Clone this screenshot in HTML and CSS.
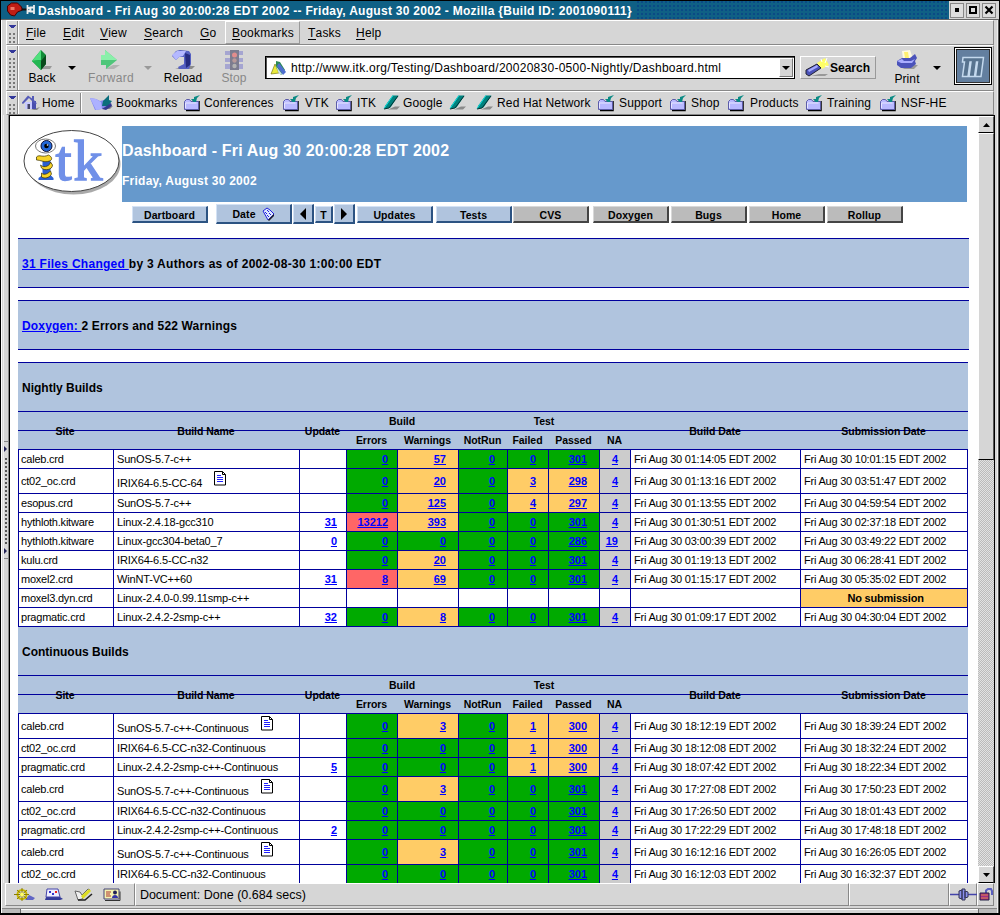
FILE: index.html
```html
<!DOCTYPE html>
<html lang="en">
<head>
<meta charset="utf-8">
<title>Dashboard - Fri Aug 30 20:00:28 EDT 2002</title>
<link rel="stylesheet" href="styles.css">
</head>
<body>
<svg class="defs" width="0" height="0">
  <symbol id="folder" viewBox="0 0 18 17">
    <path d="M2 15.500h13V6" fill="none" stroke="#000" stroke-width="1.500"/>
    <path d="M.5 6.500l2-2h3l1.500 2h7.500v8H.5z" fill="#b9b9ff" stroke="#5c5ca8"/>
    <path d="M1.500 13V8h11" fill="none" stroke="#e6e6ff"/>
    <path d="M7 4l3 0V2L16 0l-3 3-1 4H9.500z" fill="#0a8a84"/>
  </symbol>
  <symbol id="marker" viewBox="0 0 18 17">
    <path d="M5 14.500h9l3-3h-5z" fill="#8a8a8a"/>
    <path d="M9.500.5h6l-8 12-6 1.500.5-3z" fill="#00827e"/>
    <path d="M1 13.500L10 .5" stroke="#12e0e0" fill="none"/>
    <path d="M1 14l5-1 9-12" stroke="#033" fill="none"/>
  </symbol>
  <symbol id="note" viewBox="0 0 13 15">
    <path d="M.5.5h8l3 3v10.500H.5z" fill="#fff" stroke="#000"/>
    <path d="M8.500.5v3h3" fill="none" stroke="#000"/>
    <path d="M3 4.500h4M3 6.500h6M3 8.500h6M3 10.500h6" stroke="#22f"/>
  </symbol>
</svg>
<div class="window">
  <header class="titlebar">
    <svg class="pin" width="32" height="16" viewBox="0 0 32 16"><path d="M2 4l4-3 6 0 4 4 1 3-5 2-3 4-4-1-3-4z" fill="#c01d14" stroke="#400"/><path d="M5 5h4v3H5z" fill="#e76"/><path d="M16 7.500h6" stroke="#111" stroke-width="2"/><path d="M22 3v9M22 5l3 2v1l-3 2M28.500 3v9M24 5.500h5M24 9.500h5" stroke="#eee" stroke-width="1.800" fill="none"/></svg>
    <span class="title">Dashboard - Fri Aug 30 20:00:28 EDT 2002 -- Friday, August 30 2002 - Mozilla {Build ID: 2001090111}</span>
    <span class="texture"></span>
    <div class="winbtns">
      <b><svg width="12" height="12"><path d="M4 4h4v4H4z"/></svg></b><b><svg width="12" height="12"><path d="M3 3h6v6H3z" fill="none" stroke="#000" stroke-width="2"/></svg></b><b><svg width="12" height="12"><path d="M2.500 2.500l7 7M9.500 2.500l-7 7" stroke="#000" stroke-width="2.200"/></svg></b>
    </div>
  </header>

  <div class="bar menubar">
    <i class="grip"></i>
    <nav class="menu">
      <span class="m1"><u>F</u>ile</span><span class="m2"><u>E</u>dit</span><span class="m3"><u>V</u>iew</span><span class="m4"><u>S</u>earch</span><span class="m5"><u>G</u>o</span><span class="m6"><u>B</u>ookmarks</span><span class="m7"><u>T</u>asks</span><span class="m8"><u>H</u>elp</span>
    </nav>
  </div>

  <div class="bar navbar">
    <i class="grip"></i>
    <div class="tool back"><svg width="22" height="21"><path d="M8 19h11l2-3h-7z" fill="#999"/><path d="M10 0l5 5v9l-5 6-9-9z" fill="#128c38"/><path d="M10 0v10l-9 1z" fill="#4fe07c"/><path d="M10 10v10l-9-9z" fill="#22b652"/><path d="M10 11l5-6v9l-5 6z" fill="#0a4a1c"/></svg><span>Back</span></div>
    <i class="drop d1"></i>
    <div class="tool fwd"><svg width="22" height="21"><path d="M6 19h9l6-4h-7z" fill="#b3b3b3"/><path d="M6 0l12 10-11 9V15H2V5h4z" fill="#4fc67a"/><path d="M6 0l12 10H2V5h4z" fill="#8af0aa"/></svg><span>Forward</span></div>
    <i class="drop d2"></i>
    <div class="tool reload"><svg width="24" height="21"><path d="M4 19h17l3-3h-9z" fill="#8c8c8c"/><path d="M5 1l4-1 9 1 2 3v10l-2 5H8l-1-2 6-3V7H8L5 10 1 6z" fill="#5560c2"/><path d="M1 5l5-4 9 0-3 5-4 1-3 3z" fill="#b4b8ff"/><path d="M14 3l5 2v10l-4 3z" fill="#252b80"/></svg><span>Reload</span></div>
    <div class="tool stop"><svg width="20" height="21"><path d="M1 1h18v4H1zM1 8h18v4H1zM1 14h18v5H1z" fill="#9a9ad0"/><path d="M6 0h9v20H6z" fill="#66667e"/><circle cx="10.500" cy="5" r="2.500" fill="#e57b7b"/><circle cx="10.500" cy="10.500" r="2.200" fill="#b08a8a"/><circle cx="10.500" cy="16" r="2.200" fill="#aaa"/></svg><span>Stop</span></div>
    <div class="url"><svg width="18" height="18" viewBox="0 0 18 18"><path d="M1 15l4-10 4 9z" fill="#eaea3c" stroke="#660" stroke-width=".6"/><path d="M6 2l4 1 5 8-4 5-5-8z" fill="#2a8a56"/><path d="M9 4l7 9-3 3-6-9z" fill="#4f6fd0"/><path d="M6 7l6 8H9z" fill="#cde"/></svg><span>http://www.itk.org/Testing/Dashboard/20020830-0500-Nightly/Dashboard.html</span><b><i class="drop"></i></b></div>
    <div class="search"><svg width="25" height="19"><path d="M12 5l8-5 4 7-7 4z" fill="#ffff66"/><path d="M16 1l1 3M22 0l-2 5M24 9l-4-1" stroke="#fff"/><path d="M6 18h14l3-2h-9z" fill="#999"/><path d="M1 12l11-6 4 4-12 8-3-2z" fill="#4a52b8" stroke="#223"/><path d="M3 12l9-5 1 2-9 5z" fill="#a5a9ff"/></svg><span>Search</span></div>
    <div class="tool print"><svg width="26" height="21"><path d="M8 19h12l4-4h-5z" fill="#999"/><path d="M8 1l8-1 3 9H9z" fill="#fffbe0"/><path d="M10 2h4l1 6h-4z" fill="#fff070"/><path d="M3 11l5-3h8l5-4 2 4-2 3 1 3-5 4H7l-4-3z" fill="#4b53ba"/><path d="M3 11l5-2 2 2h7l4-2-3 4H7z" fill="#a9adff"/></svg><span>Print</span></div>
    <i class="drop d3"></i>
    <div class="throb"><svg width="32" height="32"><path d="M6 7.500h20.500L24 26.500h-5.500L20.500 12h-1L17.500 26.500h-5.500L14 12h-1L11 26.500H5.500L7.500 12H5.500z" fill="#57738f" stroke="#c4d9ee" stroke-width="1.500"/></svg></div>
  </div>

  <div class="bar links">
    <i class="grip"></i>
    <span class="l0"><svg width="20" height="17" viewBox="0 0 20 17"><path d="M12 14l6-2-3 3H9z" fill="#888"/><path d="M3 7h7v7H3z" fill="#c8caff"/><path d="M10 6h4v8h-4z" fill="#4a4fae"/><path d="M-.5 8L6 .5l4 3V1h2v4l3 3.500-2 .5-6-6-6 6z" fill="#555bb8"/><path d="M5.500 9h2.500v5H5.500z" fill="#446"/></svg>Home</span>
    <i class="vsep"></i>
    <span class="l1"><svg width="26" height="17" viewBox="0 0 26 17"><path d="M8 14h12l3-3z" fill="#888"/><path d="M0 3l6 1 4 2 8-2 3 5-9 5-7 1z" fill="#8287ec"/><path d="M0 3l6 1 5 3 1 7-6 1z" fill="#adb1ff"/><path d="M13 6l6-6v5l3 1-4 5h-6z" fill="#0b6e7c"/><path d="M12 14l9-6 1 3-6 4z" fill="#33388e"/></svg>Bookmarks</span>
    <span class="l2"><svg class="i20"><use href="#folder"/></svg>Conferences</span>
    <span class="l3"><svg class="i22"><use href="#folder"/></svg>VTK</span>
    <span class="l4"><svg class="i21"><use href="#folder"/></svg>ITK</span>
    <span class="l5"><svg class="i20"><use href="#marker"/></svg>Google</span>
    <span class="l6"><svg class="i20"><use href="#marker"/></svg></span>
    <span class="l7"><svg class="i21"><use href="#marker"/></svg>Red Hat Network</span>
    <span class="l8"><svg class="i21"><use href="#folder"/></svg>Support</span>
    <span class="l9"><svg class="i21"><use href="#folder"/></svg>Shop</span>
    <span class="l10"><svg class="i22"><use href="#folder"/></svg>Products</span>
    <span class="l11"><svg class="i21"><use href="#folder"/></svg>Training</span>
    <span class="l12"><svg class="i21"><use href="#folder"/></svg>NSF-HE</span>
  </div>

  <div class="main">
    <aside class="split"><i></i></aside>
    <section class="page">
      <div class="head">
        <svg class="logo" width="98" height="67" viewBox="0 0 98 67">
          <ellipse cx="50" cy="34" rx="47" ry="30.500" fill="#aaa"/>
          <ellipse cx="48" cy="31" rx="47.500" ry="30.500" fill="#fff" stroke="#444"/>
          <text x="32" y="50" class="tk">tk</text>
          <path d="M14 27h13v18l3 3v2H15v-2l4-3V31z" fill="#2b5fd0"/>
          <path d="M13 27c3-3 6 1 12-2 4 2 4 5 1 6-5 2-9-1-13-1zM17 35c4 4 10 0 10-3l2 3c0 5-8 6-11 3zM18 43c3 3 7 0 9-2l1 3c-2 4-7 5-10 3z" fill="#f6d327" stroke="#332b00" stroke-width=".7"/>
          <ellipse cx="22" cy="16" rx="10" ry="7" fill="#fff" stroke="#777"/>
          <circle cx="23" cy="16" r="5.500" fill="#2468d8" stroke="#113"/><circle cx="23" cy="16" r="2.300"/><circle cx="24" cy="15" r=".8" fill="#fff"/>
        </svg>
        <div class="banner"><h1>Dashboard - Fri Aug 30 20:00:28 EDT 2002</h1><h2>Friday, August 30 2002</h2></div>
      </div>
      <div class="btns">
        <b class="bl b1">Dartboard</b><b class="bl tall b2">Date <svg width="14" height="14"><path d="M2 4l4-3 3 2 4 4-6 6z" fill="#dde6ff" stroke="#22d"/><path d="M7 13l6-6v2l-5 5z" fill="#222"/><path d="M4 5l2 2M6 3l2 2M6 8l2 2M8 6l2 2" stroke="#22d"/></svg></b><b class="bl tall b3"><svg width="8" height="12"><path d="M7 0v12L1 6z"/></svg></b><b class="bl b4">T</b><b class="bl tall b5"><svg width="8" height="12"><path d="M1 0v12l6-6z"/></svg></b><b class="bl b6">Updates</b><b class="bl b7">Tests</b><b class="b8">CVS</b><b class="b9">Doxygen</b><b class="b10">Bugs</b><b class="b11">Home</b><b class="b12">Rollup</b>
      </div>
      <p class="panel"><a>31 Files Changed </a>by 3 Authors as of 2002-08-30 1:00:00 EDT</p>
      <p class="panel dox"><a>Doxygen: </a>2 Errors and 522 Warnings</p>
      <table>
        <colgroup><col class="c1"><col class="c2"><col class="c3"><col class="c4"><col class="c5"><col class="c6"><col class="c7"><col class="c8"><col class="c9"><col class="c10"><col class="c11"></colgroup>
        <tr class="cap"><th colspan="11">Nightly Builds</th></tr>
        <tr class="h"><th rowspan="2" class="x">Site</th><th rowspan="2" class="x">Build Name</th><th rowspan="2" class="x">Update</th><th colspan="2">Build</th><th colspan="4">Test</th><th rowspan="2" class="x">Build Date</th><th rowspan="2" class="x">Submission Date</th></tr>
        <tr class="h"><th>Errors</th><th>Warnings</th><th>NotRun</th><th>Failed</th><th>Passed</th><th>NA</th></tr>
        <tr><td>caleb.crd<td>SunOS-5.7-c++<td><td class="g"><a>0</a><td class="o"><a>57</a><td class="g"><a>0</a><td class="g"><a>0</a><td class="g"><a>301</a><td class="n"><a>4</a><td>Fri Aug 30 01:14:05 EDT 2002<td>Fri Aug 30 10:01:15 EDT 2002</tr>
        <tr class="t"><td>ct02_oc.crd<td>IRIX64-6.5-CC-64<svg class="note"><use href="#note"/></svg><td><td class="g"><a>0</a><td class="o"><a>20</a><td class="g"><a>0</a><td class="o"><a>3</a><td class="o"><a>298</a><td class="n"><a>4</a><td>Fri Aug 30 01:13:16 EDT 2002<td>Fri Aug 30 03:51:47 EDT 2002</tr>
        <tr><td>esopus.crd<td>SunOS-5.7-c++<td><td class="g"><a>0</a><td class="o"><a>125</a><td class="g"><a>0</a><td class="o"><a>4</a><td class="o"><a>297</a><td class="n"><a>4</a><td>Fri Aug 30 01:13:55 EDT 2002<td>Fri Aug 30 04:59:54 EDT 2002</tr>
        <tr><td>hythloth.kitware<td>Linux-2.4.18-gcc310<td><a>31</a><td class="r"><a>13212</a><td class="o"><a>393</a><td class="g"><a>0</a><td class="g"><a>0</a><td class="g"><a>301</a><td class="n"><a>4</a><td>Fri Aug 30 01:30:51 EDT 2002<td>Fri Aug 30 02:37:18 EDT 2002</tr>
        <tr><td>hythloth.kitware<td>Linux-gcc304-beta0_7<td><a>0</a><td class="g"><a>0</a><td class="g"><a>0</a><td class="g"><a>0</a><td class="g"><a>0</a><td class="g"><a>286</a><td class="n"><a>19</a><td>Fri Aug 30 03:00:39 EDT 2002<td>Fri Aug 30 03:49:22 EDT 2002</tr>
        <tr><td>kulu.crd<td>IRIX64-6.5-CC-n32<td><td class="g"><a>0</a><td class="o"><a>20</a><td class="g"><a>0</a><td class="g"><a>0</a><td class="g"><a>301</a><td class="n"><a>4</a><td>Fri Aug 30 01:19:13 EDT 2002<td>Fri Aug 30 06:28:41 EDT 2002</tr>
        <tr><td>moxel2.crd<td>WinNT-VC++60<td><a>31</a><td class="r"><a>8</a><td class="o"><a>69</a><td class="g"><a>0</a><td class="g"><a>0</a><td class="g"><a>301</a><td class="n"><a>4</a><td>Fri Aug 30 01:15:17 EDT 2002<td>Fri Aug 30 05:35:02 EDT 2002</tr>
        <tr><td>moxel3.dyn.crd<td>Linux-2.4.0-0.99.11smp-c++<td><td><td><td><td><td><td><td><td class="o none">No submission</tr>
        <tr><td>pragmatic.crd<td>Linux-2.4.2-2smp-c++<td><a>32</a><td class="g"><a>0</a><td class="o"><a>8</a><td class="g"><a>0</a><td class="g"><a>0</a><td class="g"><a>301</a><td class="n"><a>4</a><td>Fri Aug 30 01:09:17 EDT 2002<td>Fri Aug 30 04:30:04 EDT 2002</tr>
        <tr class="cap"><th colspan="11">Continuous Builds</th></tr>
        <tr class="h"><th rowspan="2" class="x">Site</th><th rowspan="2" class="x">Build Name</th><th rowspan="2" class="x">Update</th><th colspan="2">Build</th><th colspan="4">Test</th><th rowspan="2" class="x">Build Date</th><th rowspan="2" class="x">Submission Date</th></tr>
        <tr class="h"><th>Errors</th><th>Warnings</th><th>NotRun</th><th>Failed</th><th>Passed</th><th>NA</th></tr>
        <tr class="t"><td>caleb.crd<td>SunOS-5.7-c++-Continuous<svg class="note"><use href="#note"/></svg><td><td class="g"><a>0</a><td class="o"><a>3</a><td class="g"><a>0</a><td class="o"><a>1</a><td class="o"><a>300</a><td class="n"><a>4</a><td>Fri Aug 30 18:12:19 EDT 2002<td>Fri Aug 30 18:39:24 EDT 2002</tr>
        <tr><td>ct02_oc.crd<td>IRIX64-6.5-CC-n32-Continuous<td><td class="g"><a>0</a><td class="g"><a>0</a><td class="g"><a>0</a><td class="o"><a>1</a><td class="o"><a>300</a><td class="n"><a>4</a><td>Fri Aug 30 18:12:08 EDT 2002<td>Fri Aug 30 18:32:24 EDT 2002</tr>
        <tr><td>pragmatic.crd<td>Linux-2.4.2-2smp-c++-Continuous<td><a>5</a><td class="g"><a>0</a><td class="g"><a>0</a><td class="g"><a>0</a><td class="o"><a>1</a><td class="o"><a>300</a><td class="n"><a>4</a><td>Fri Aug 30 18:07:42 EDT 2002<td>Fri Aug 30 18:22:34 EDT 2002</tr>
        <tr class="t"><td>caleb.crd<td>SunOS-5.7-c++-Continuous<svg class="note"><use href="#note"/></svg><td><td class="g"><a>0</a><td class="o"><a>3</a><td class="g"><a>0</a><td class="g"><a>0</a><td class="g"><a>301</a><td class="n"><a>4</a><td>Fri Aug 30 17:27:08 EDT 2002<td>Fri Aug 30 17:50:23 EDT 2002</tr>
        <tr><td>ct02_oc.crd<td>IRIX64-6.5-CC-n32-Continuous<td><td class="g"><a>0</a><td class="g"><a>0</a><td class="g"><a>0</a><td class="g"><a>0</a><td class="g"><a>301</a><td class="n"><a>4</a><td>Fri Aug 30 17:26:50 EDT 2002<td>Fri Aug 30 18:01:43 EDT 2002</tr>
        <tr><td>pragmatic.crd<td>Linux-2.4.2-2smp-c++-Continuous<td><a>2</a><td class="g"><a>0</a><td class="g"><a>0</a><td class="g"><a>0</a><td class="g"><a>0</a><td class="g"><a>301</a><td class="n"><a>4</a><td>Fri Aug 30 17:22:29 EDT 2002<td>Fri Aug 30 17:48:18 EDT 2002</tr>
        <tr class="t"><td>caleb.crd<td>SunOS-5.7-c++-Continuous<svg class="note"><use href="#note"/></svg><td><td class="g"><a>0</a><td class="o"><a>3</a><td class="g"><a>0</a><td class="g"><a>0</a><td class="g"><a>301</a><td class="n"><a>4</a><td>Fri Aug 30 16:12:16 EDT 2002<td>Fri Aug 30 16:26:05 EDT 2002</tr>
        <tr><td>ct02_oc.crd<td>IRIX64-6.5-CC-n32-Continuous<td><td class="g"><a>0</a><td class="g"><a>0</a><td class="g"><a>0</a><td class="g"><a>0</a><td class="g"><a>301</a><td class="n"><a>4</a><td>Fri Aug 30 16:12:03 EDT 2002<td>Fri Aug 30 16:32:37 EDT 2002</tr>
      </table>
    </section>
    <div class="scroll"><b class="sb"><svg width="7" height="4"><path d="M0 4l3.500-4L7 4z"/></svg></b><b class="thumb"></b><i class="track"></i><b class="sb"><svg width="7" height="4"><path d="M0 0l3.500 4L7 0z"/></svg></b></div>
  </div>

  <footer class="status">
    <div class="s1">
      <svg width="22" height="15"><path d="M12 12h8l2-2-6-3z" fill="#6166c4"/><circle cx="9" cy="6.500" r="4.500" fill="none" stroke="#c8b800" stroke-width="2"/><path d="M9 0v13M1 6.500h15M4 2l10 9M14 2L4 11" stroke="#8a7c00"/><circle cx="9" cy="6.500" r="2" fill="#ff6"/></svg>
      <svg width="22" height="15"><path d="M3 9h14l3 2-3 1H2z" fill="#333a99"/><path d="M4 1h11l2 8H3z" fill="#eef" stroke="#44a"/><path d="M6 3h2v2H6zM9 5h2v2H9z" fill="#33c"/><path d="M12 3h2v2h-2z" fill="#e22"/></svg>
      <svg width="22" height="15"><path d="M2 3l5 1 2 3 6-6 2 1-8 9-4 1z" fill="#eee" stroke="#666"/><path d="M8 8l8-7 2 2-8 8z" fill="#dd2"/><path d="M5 12h7l7-6" stroke="#222" fill="none" stroke-width="1.500"/></svg>
      <svg width="20" height="15"><path d="M1 1h15v10H1z" fill="#f4f2b0" stroke="#447"/><path d="M3 4h5M3 6h4M3 8h5" stroke="#a33"/><circle cx="12" cy="4.500" r="2" fill="#225"/><path d="M9 10c0-4 6-4 6 0z" fill="#33a"/><path d="M2 12.500h15v-9" stroke="#333" fill="none"/></svg>
    </div>
    <div class="s2">Document: Done (0.684 secs)</div>
    <div class="s3"></div>
    <div class="s4"><svg width="27" height="15"><path d="M0 6.500h9M18 6.500h9" stroke="#44a" stroke-width="1.500"/><path d="M9 3l3-1v9l-3-1zM12 1h3v11h-3zM15 3l3 1v5l-3 1z" fill="#8a8fec" stroke="#335"/></svg></div>
    <div class="s5"><svg width="17" height="15"><path d="M8 5V2.500l2-1.500h3l1 2V7" fill="none" stroke="#5a5fc0" stroke-width="2"/><path d="M2 5h9v7H2z" fill="#a22c86" stroke="#224"/><path d="M3 7h7M3 10h7" stroke="#d84"/></svg></div>
  </footer>
  <div class="bottom"><i></i><i></i></div>
</div>
</body>
</html>
```
FILE: styles.css
```css
* { box-sizing: border-box; }
body { margin: 0; width: 1000px; height: 915px; overflow: hidden; background: #000; font-family: "Liberation Sans", Arial, sans-serif; color: #000; }
svg { flex: none; display: block; }
.defs { position: absolute; }
i { font-style: normal; }
a { color: #00f; text-decoration: underline; }

.window { display: flex; flex-direction: column; width: 999px; height: 913px; background: #d6d6d6; border-left: 1px solid #000; padding: 0 3px 0 2px; box-shadow: inset 1px 0 #fff, inset -1px 0 #555, inset -2px 0 #eee; }

.titlebar { display: flex; align-items: center; flex: none; height: 20px; margin: 0 -3px 0 -2px; background: #0f6085; border-top: 1px solid #000; border-bottom: 1px solid #666; color: #fff; padding-left: 4px; }
.pin { width: 33px; }
.title { font-weight: bold; font-size: 12px; letter-spacing: .285px; line-height: 18px; padding-top: 2px; white-space: nowrap; }
.texture { flex: 1; align-self: stretch; margin-left: 5px; background: radial-gradient(circle at 1px 1px, #0a4a86 1px, transparent 1.200px) 0 0 / 4px 4px; }
.winbtns { display: flex; gap: 2px; height: 18px; padding: 2px 3px 0 1px; background: #d6d6d6; }
.winbtns b { width: 14px; height: 15px; border: 1px solid; border-color: #fff #666 #666 #fff; outline: 1px solid #888; outline-offset: -1px; background: #ddd; }

.bar { display: flex; flex: none; margin: 0 2px 0 3px; border: 1px solid; border-color: #fff #888 #888 #fff; white-space: nowrap; }
.grip { flex: none; width: 11px; border-right: 1px solid #888; box-shadow: 1px 0 #fff; background: linear-gradient(#33389a, #33389a) 2px 4px / 7px 1px no-repeat, linear-gradient(#33389a, #33389a) 3px 5px / 5px 1px no-repeat, linear-gradient(#33389a, #33389a) 4px 6px / 3px 1px no-repeat, linear-gradient(#d6d6d6, #d6d6d6) 0 0 / 11px 11px no-repeat, radial-gradient(circle at 1px 1px, #777 .8px, transparent 1px) 2px 0 / 4px 4px; }
.menubar { height: 25px; }
.menu { display: flex; font-size: 12px; letter-spacing: .2px; line-height: 24px; padding-left: 8px; }
.menu u { text-decoration: none; box-shadow: inset 0 -1px #000; display: inline-block; line-height: 14px; }
.m1, .m2 { width: 37px; } .m3 { width: 44px; } .m4 { width: 56px; } .m5 { width: 25px; }
.m6 { width: 75px; padding-left: 6px; border: 1px solid; border-color: #fff #999 #999 #fff; line-height: 22px; margin-right: 8px; }
.m7 { width: 48px; }

.navbar { height: 46px; position: relative; }
.tool { display: flex; flex-direction: column; align-items: center; padding-top: 4px; font-size: 12px; letter-spacing: .1px; }
.tool svg { height: 21px; }
.tool span { line-height: 14px; }
.back { width: 30px; margin-left: 9px; }
.drop { width: 0; height: 0; border: solid transparent; border-width: 4px 4px 0; border-top-color: #000; }
.d1 { margin: 20px 0 0 11px; }
.fwd { width: 48px; margin-left: 11px; color: #888; letter-spacing: .25px; }
.fwd svg { margin-left: -3px; }
.d2 { margin: 20px 0 0 9px; border-top-color: #999; }
.reload { width: 42px; margin-left: 10px; }
.stop { width: 30px; margin-left: 15px; color: #888; }
.stop svg { opacity: .8; }
.url { display: flex; align-items: center; width: 530px; height: 23px; margin: 10px 0 0 16px; border: 1px solid #000; outline: 0; background: #fff; padding: 0 1px 0 4px; font-size: 12px; box-shadow: inset 1px 1px #555; }
.url span { flex: 1; margin-left: 3px; letter-spacing: .265px; }
.url b { display: flex; justify-content: center; align-items: center; width: 14px; height: 19px; background: #d6d6d6; border: 1px solid; border-color: #fff #777 #777 #fff; }
.search { display: flex; align-items: center; width: 76px; height: 23px; margin: 10px 0 0 5px; padding-left: 4px; border: 1px solid; border-color: #fff #999 #999 #fff; font-weight: bold; font-size: 12px; }
.print { width: 28px; margin-left: 17px; }
.print span { margin-top: 1px; }
.d3 { margin: 20px 0 0 12px; }
.throb { width: 38px; height: 38px; margin: 1px 0 0 13px; background: #637f9f; border: 1px solid #000; box-shadow: inset 1px 1px #fff, inset -1px -1px #fff, inset 2px 2px #222, inset -2px -2px #333; padding: 2px; }

.links { height: 24px; font-size: 12px; line-height: 22px; letter-spacing: .15px; }
.links span { flex: none; display: flex; }
.links svg { height: 17px; margin-top: 3px; }
.i20 { width: 20px; padding-right: 2px; } .i22 { width: 22px; padding-right: 4px; } .i21 { width: 21px; padding-right: 3px; }
.vsep { width: 2px; margin: 1px 8px 1px 0; border-left: 1px solid #888; border-right: 1px solid #fff; }
.l0 { width: 58px; margin-left: 4px; } .l1 { width: 94px; } .l2 { width: 99px; } .l3 { width: 53px; } .l4 { width: 47px; } .l5 { width: 66px; } .l6 { width: 27px; } .l7 { width: 122px; } .l8 { width: 72px; } .l9 { width: 58px; } .l10 { width: 78px; } .l11 { width: 74px; }

.main { display: flex; height: 768px; flex: none; }
.split { flex: none; width: 6px; padding-top: 326px; border-left: 1px solid #eee; border-right: 1px solid #888; }
.split i { display: block; height: 118px; border: solid #888; border-width: 1px 0; background: linear-gradient(#d6d6d6, #d6d6d6) 0 0 / 100% 14px no-repeat, linear-gradient(#d6d6d6, #d6d6d6) 0 100% / 100% 14px no-repeat, radial-gradient(circle at 1px 1px, #555 .8px, transparent 1px) 1px 0 / 3px 4px; position: relative; }
.split i::before, .split i::after { content: ""; position: absolute; left: 0; top: 4px; border: solid transparent; border-width: 3px 0 3px 3px; border-left-color: #225; }
.split i::after { top: 106px; }
.page { width: 969px; height: 768px; overflow: hidden; background: #fff; border-left: 1px solid #000; border-top: 1px solid #000; padding: 10px 0 0 8px; }
.head { display: flex; height: 76px; padding-left: 5px; }
.logo { width: 99px; margin-top: 4px; }
.tk { font: 58px "Liberation Serif", "Times New Roman", serif; fill: #7090e8; stroke: #7090e8; stroke-width: 1.500px; letter-spacing: 2px; }
.banner { width: 845px; background: #69c; color: #fff; }
h1 { margin: 15px 0 0; font-size: 16px; line-height: 19px; letter-spacing: .17px; }
h2 { margin: 13px 0 0; font-size: 12px; line-height: 16px; letter-spacing: .25px; }
.btns { display: flex; height: 36px; padding: 4px 0 0 114px; font-size: 10.500px; letter-spacing: .1px; }
.btns b { display: flex; align-items: center; justify-content: center; gap: 5px; flex: none; width: 76px; height: 17px; background: #bbb; border: solid; border-width: 1px 2px 2px 1px; border-color: #d8d8d8 #444 #444 #d8d8d8; padding-top: 1px; }
.btns .bl { background: #b0c4de; border-color: #d3e2f5 #2c5382 #2c5382 #d3e2f5; }
.btns .tall { height: 20px; margin-top: -2px; padding-top: 0; }
.btns .b2 { margin-left: 8px; } .btns .b3 { width: 21px; margin-left: 1px; } .btns .b4 { width: 18px; margin: 0 1px; } .btns .b5 { width: 21px; } .btns .b6 { margin-left: 2px; } .btns .b7 { margin-left: 3px; } .btns .b8 { margin-left: 1px; } .btns .b9 { margin-left: 4px; } .btns .b10, .btns .b11, .btns .b12 { margin-left: 2px; }
.panel { margin: 0 0 12px; width: 951px; height: 50px; padding-left: 4px; background: #b0c4de; border: solid #00009c; border-width: 1px 0; font-weight: bold; font-size: 12px; line-height: 50px; letter-spacing: .28px; }
.dox { letter-spacing: .16px; }

table { width: 950px; table-layout: fixed; border-spacing: 0; border-top: 1px solid #00009c; font-size: 11px; }
.c1 { width: 96px; } .c2 { width: 186px; } .c3 { width: 47px; } .c4 { width: 51px; } .c5 { width: 61px; } .c6 { width: 49px; } .c7 { width: 41px; } .c8 { width: 51px; } .c9 { width: 31px; } .c10 { width: 170px; } .c11 { width: 167px; }
tr { height: 19px; }
th { padding: 0; background: #b0c4de; border-bottom: 1px solid #00009c; line-height: 18px; }
.cap { height: 49px; }
.cap th { text-align: left; padding: 1px 0 0 4px; font-size: 12px; }
.h th { font-size: 10.500px; white-space: nowrap; padding-right: 2px; letter-spacing: -.05px; }
.h .x { background: linear-gradient(#00009c, #00009c) 0 18px / 100% 1px no-repeat #b0c4de; padding-top: 1px; }
td { padding: 0 0 0 3px; line-height: 18px; border: solid #00009c; border-width: 0 1px 1px 0; white-space: nowrap; letter-spacing: -.22px; }
td:first-child { border-left-width: 1px; padding-left: 2px; }
td:nth-child(2) { letter-spacing: -.17px; }
.t { height: 25px; }
.t td:nth-child(2) { padding-top: 4px; line-height: 20px; }
.note { display: inline-block; width: 13px; height: 15px; margin: -8px 0 0 12px; vertical-align: 1px; }
td:nth-child(n+3):nth-child(-n+9) { text-align: right; padding: 0 12px 0 0; font-weight: bold; letter-spacing: 0; }
td:nth-child(3), td:nth-child(4) { padding-right: 9px !important; }
.g { background: #0a0; } .o { background: #fc6; } .r { background: #f66; } .n { background: #ccc; }
.none { text-align: center; font-weight: bold; letter-spacing: -.2px; }

.scroll { display: flex; flex-direction: column; width: 17px; background: #ddd; border-top: 1px solid #000; border-right: 1px solid #000; }
.sb, .thumb { flex: none; display: flex; justify-content: center; align-items: center; height: 17px; background: #d6d6d6; border: 1px solid; border-color: #fff #555 #000 #fff; }
.thumb { height: 327px; }
.track { flex: 1; background: repeating-conic-gradient(#bbb 0 25%, #e2e2e2 0 50%) 0 0 / 2px 2px; }

.status { display: flex; flex: none; height: 23px; margin: 0 2px 0 2px; font-size: 12.500px; }
.status div { border: 1px solid; border-color: #fff #888 #888 #fff; line-height: 23px; }
.s1 { display: flex; width: 130px; gap: 8px; padding: 4px 0 0 7px; }
.s2 { width: 715px; padding-left: 4px; }
.s3 { width: 100px; } .s4 { width: 28px; padding-top: 4px; } .s5 { width: 17px; padding-top: 4px; }
.bottom { display: flex; justify-content: space-between; margin: 2px -1px 0; height: 6px; border-top: 1px solid #888; box-shadow: inset 0 1px #fff; }
.bottom i { width: 19px; background: #bbb; border-right: 1px solid #666; }
.bottom i:last-child { border: 0; border-left: 1px solid #666; }
```
